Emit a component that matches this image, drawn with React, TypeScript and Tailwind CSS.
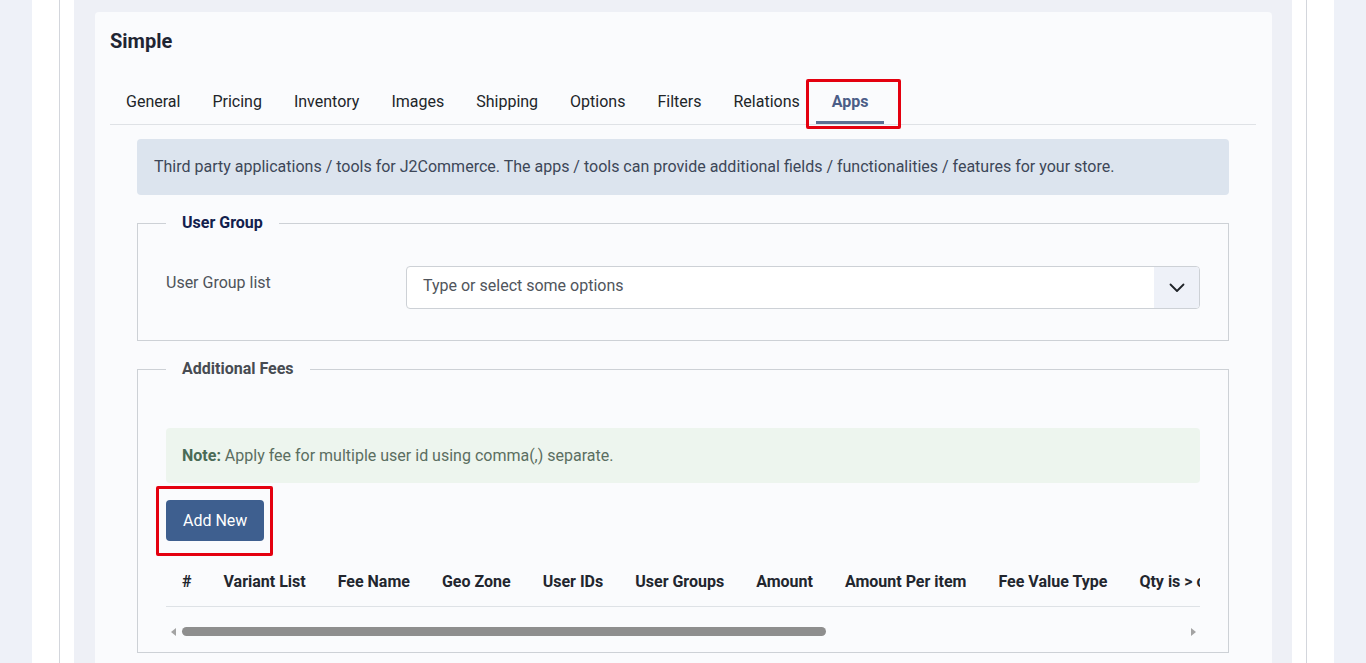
import React from "react";

const tabs = [
    "General",
    "Pricing",
    "Inventory",
    "Images",
    "Shipping",
    "Options",
    "Filters",
    "Relations",
    "Apps",
];

const columns = [
    "#",
    "Variant List",
    "Fee Name",
    "Geo Zone",
    "User IDs",
    "User Groups",
    "Amount",
    "Amount Per item",
    "Fee Value Type",
    "Qty is > or equal",
    "Qty is < or equal",
    "Action",
];

function ChevronDown() {
    return (
        <svg width="16" height="10" viewBox="0 0 16 10" fill="none">
            <polyline
                points="1.5,1.5 8,8 14.5,1.5"
                stroke="#1f2328"
                strokeWidth="1.8"
                strokeLinecap="round"
                strokeLinejoin="round"
            />
        </svg>
    );
}

export default function App() {
    return (
        <div
            className="flex h-[663px] overflow-hidden bg-[#eef1f8] px-[32px] text-[#212529]"
            style={{ fontFamily: "Roboto, 'Liberation Sans', sans-serif" }}
        >
            <div className="flex min-w-0 flex-1 bg-white px-[27px]">
                <div className="flex min-w-0 flex-1 border-x border-[#d3d6dc] bg-white px-[14px]">
                    <div className="min-w-0 flex-1 bg-[#eef0f6] pl-[21px] pr-[20px] pt-[12px]">
                        <div className="rounded-sm bg-[#fafbfd] px-[15px] pb-10 pt-[15px]">
                            <h2 className="text-[20px] font-bold leading-7 text-[#1f2533]">
                                Simple
                            </h2>

                            {/* tabs */}
                            <div className="mt-[26px] mr-px flex border-b border-[#dfe2e6]">
                                {tabs.map((tab) =>
                                    tab === "Apps" ? (
                                        <div
                                            key={tab}
                                            className="relative border-b-[3px] border-[#5b6f94] px-4 pt-[9px] pb-[7px] text-base font-bold text-[#4b5d87]"
                                        >
                                            {tab}
                                            <span className="absolute -top-[2px] -bottom-[8px] -left-[10px] -right-[17px] rounded-[2px] border-[3px] border-[#e4000f]" />
                                        </div>
                                    ) : (
                                        <div
                                            key={tab}
                                            className="border-b-[3px] border-transparent px-4 pt-[9px] pb-[7px] text-base text-[#212529]"
                                        >
                                            {tab}
                                        </div>
                                    )
                                )}
                            </div>

                            <div className="pl-[27px] pr-[28px] pt-[14px]">
                                <div className="rounded bg-[#dce4ee] px-[17px] py-4 text-base text-[#3d4758]">
                                    Third party applications / tools for
                                    J2Commerce. The apps / tools can provide
                                    additional fields / functionalities /
                                    features for your store.
                                </div>

                                {/* user group */}
                                <fieldset className="mt-4 min-w-0 border border-[#cdd1d6] px-[28px] pb-[31px]">
                                    <legend className="px-4 text-base font-bold text-[#12204d]">
                                        User Group
                                    </legend>
                                    <div className="mt-[31px] flex items-start">
                                        <label className="w-[240px] pt-[5px] text-base text-[#4e535a]">
                                            User Group list
                                        </label>
                                        <div className="flex h-[43px] min-w-0 flex-1 overflow-hidden rounded border border-[#cdd1d6] bg-white">
                                            <div className="flex flex-1 items-center pb-[3px] pl-4 text-base text-[#50555c]">
                                                Type or select some options
                                            </div>
                                            <div className="flex w-[45px] items-center justify-center bg-[#eef1f8]">
                                                <ChevronDown />
                                            </div>
                                        </div>
                                    </div>
                                </fieldset>

                                {/* additional fees */}
                                <fieldset className="mt-4 min-w-0 border border-[#cdd1d6] px-[28px] pb-[13px]">
                                    <legend className="px-4 text-base font-bold text-[#474b52]">
                                        Additional Fees
                                    </legend>
                                    <div className="mt-[47px] flex h-[55px] items-center rounded-sm bg-[#edf5ee] px-4 text-base text-[#5b6e61]">
                                        <span>
                                            <strong className="font-bold text-[#4a6b57]">
                                                Note:
                                            </strong>{" "}
                                            Apply fee for multiple user id using
                                            comma(,) separate.
                                        </span>
                                    </div>

                                    <div className="mt-[17px] flex">
                                        <button className="relative h-[41px] rounded bg-[#3e5f8f] px-[17px] text-base text-white">
                                            Add New
                                            <span className="absolute -top-[14px] -bottom-[15px] -left-[10px] -right-[9px] rounded-[2px] border-[3px] border-[#e4000f]" />
                                        </button>
                                    </div>

                                    <div className="mt-[17px] overflow-hidden">
                                        <table className="border-collapse">
                                            <thead>
                                                <tr className="border-b border-[#dee2e6]">
                                                    {columns.map((col) => (
                                                        <th
                                                            key={col}
                                                            className="whitespace-nowrap px-4 py-3 text-left text-base font-bold text-[#22262e]"
                                                        >
                                                            {col}
                                                        </th>
                                                    ))}
                                                </tr>
                                            </thead>
                                        </table>
                                    </div>

                                    {/* horizontal scrollbar */}
                                    <div className="mt-[17px] flex h-[15px] items-center">
                                        <div className="ml-[5px] h-0 w-0 border-y-[4px] border-r-[5px] border-y-transparent border-r-[#a3a3a3]" />
                                        <div className="ml-[6px] flex-1">
                                            <div className="h-[9px] w-[644px] rounded-full bg-[#8e8e8e]" />
                                        </div>
                                        <div className="mr-[4px] h-0 w-0 border-y-[4px] border-l-[5px] border-y-transparent border-l-[#a3a3a3]" />
                                    </div>
                                </fieldset>
                            </div>
                        </div>
                    </div>
                </div>
            </div>
        </div>
    );
}
